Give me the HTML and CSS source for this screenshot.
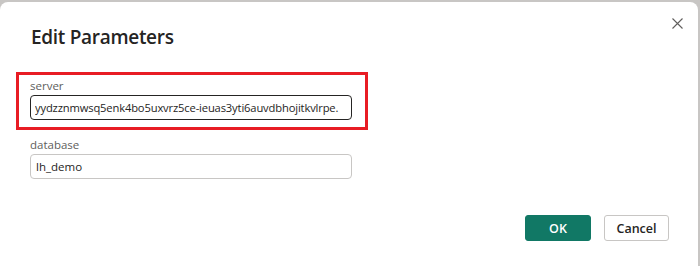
FILE: index.html
```html
<!DOCTYPE html>
<html lang="en">
<head>
    <meta charset="UTF-8">
    <meta name="viewport" content="width=device-width, initial-scale=1.0">
    <title>Edit Parameters</title>
    <link rel="stylesheet" href="styles.css">
</head>
<body>
    <div class="dialog">
        <button class="close" title="Close">
            <svg width="11" height="11" viewBox="0 0 11 11">
                <path d="M0.5 0.5 L10.5 10.5 M10.5 0.5 L0.5 10.5" stroke="#605e5c" stroke-width="1.1" fill="none"/>
            </svg>
        </button>
        <h1>Edit Parameters</h1>
        <div class="highlight">
            <div class="field">
                <label>server</label>
                <input type="text" class="focused" value="yydzznmwsq5enk4bo5uxvrz5ce-ieuas3yti6auvdbhojitkvlrpe.">
            </div>
        </div>
        <div class="field plain">
            <label>database</label>
            <input type="text" value="lh_demo">
        </div>
        <div class="buttons">
            <button class="primary">OK</button>
            <button class="secondary">Cancel</button>
        </div>
    </div>
</body>
</html>
```

FILE: styles.css
```css
body {
    margin: 0;
    background-color: #c8c6c4;
    font-family: "Open Sans", "Noto Sans", sans-serif;
    color: #252423;
    overflow: hidden;
}

.dialog {
    position: relative;
    margin: 2px 2px 0 0;
    height: 264px;
    background-color: #fff;
    border-radius: 8px 8px 0 0;
}

.close {
    position: absolute;
    top: 9px;
    right: 9px;
    width: 24px;
    height: 24px;
    border: none;
    background: none;
    padding: 0;
    display: flex;
    align-items: center;
    justify-content: center;
}

h1 {
    margin: 0;
    padding: 21px 0 0 31px;
    font-size: 19px;
    font-weight: 600;
    line-height: 28px;
    letter-spacing: -0.3px;
}

.highlight {
    margin: 21px 0 0 16px;
    width: 346px;
    height: 52px;
    border: 3px solid #e81c24;
}

.field {
    display: flex;
    flex-direction: column;
    padding-left: 11px;
}

.highlight .field {
    padding-top: 3px;
}

.field.plain {
    padding: 7px 0 0 30px;
}

.field label {
    font-size: 11.5px;
    line-height: 16px;
    color: #605e5c;
    margin-bottom: 1px;
}

.field input {
    box-sizing: border-box;
    width: 322px;
    height: 25px;
    padding: 0 5px;
    border: 1px solid #c8c6c4;
    border-radius: 4px;
    font-family: inherit;
    font-size: 11.5px;
    color: #252423;
    outline: none;
}

.field input.focused {
    border-color: #252423;
    padding: 0 3px 0 4px;
    font-size: 11.2px;
    letter-spacing: -0.15px;
}

.buttons {
    display: flex;
    justify-content: flex-end;
    gap: 13px;
    padding: 36px 29px 0 0;
}

.buttons button {
    box-sizing: border-box;
    height: 26px;
    border-radius: 3px;
    font-family: inherit;
    font-size: 12.5px;
    font-weight: 600;
}

.primary {
    width: 66px;
    background-color: #117865;
    border: 1px solid #117865;
    color: #fff;
}

.secondary {
    width: 65px;
    background-color: #fff;
    border: 1px solid #c8c6c4;
    color: #252423;
}
```
